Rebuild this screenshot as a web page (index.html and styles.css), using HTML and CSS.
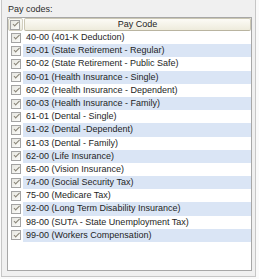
FILE: index.html
```html
<!DOCTYPE html>
<html lang="en">
<head>
    <meta charset="UTF-8">
    <title>Pay codes</title>
    <link rel="stylesheet" href="styles.css">
</head>
<body>
<div class="panel">
    <div class="caption">Pay codes:</div>
    <div class="list">
        <div class="head">
            <div class="head-check"><span class="chk"></span></div>
            <div class="head-title">Pay Code</div>
        </div>
        <div class="row"><div class="cell-check"><span class="chk"></span></div><div class="cell">40-00 (401-K Deduction)</div></div>
        <div class="row alt"><div class="cell-check"><span class="chk"></span></div><div class="cell">50-01 (State Retirement - Regular)</div></div>
        <div class="row"><div class="cell-check"><span class="chk"></span></div><div class="cell">50-02 (State Retirement - Public Safe)</div></div>
        <div class="row alt"><div class="cell-check"><span class="chk"></span></div><div class="cell">60-01 (Health Insurance - Single)</div></div>
        <div class="row"><div class="cell-check"><span class="chk"></span></div><div class="cell">60-02 (Health Insurance - Dependent)</div></div>
        <div class="row alt"><div class="cell-check"><span class="chk"></span></div><div class="cell">60-03 (Health Insurance - Family)</div></div>
        <div class="row"><div class="cell-check"><span class="chk"></span></div><div class="cell">61-01 (Dental - Single)</div></div>
        <div class="row alt"><div class="cell-check"><span class="chk"></span></div><div class="cell">61-02 (Dental -Dependent)</div></div>
        <div class="row"><div class="cell-check"><span class="chk"></span></div><div class="cell">61-03 (Dental - Family)</div></div>
        <div class="row alt"><div class="cell-check"><span class="chk"></span></div><div class="cell">62-00 (Life Insurance)</div></div>
        <div class="row"><div class="cell-check"><span class="chk"></span></div><div class="cell">65-00 (Vision Insurance)</div></div>
        <div class="row alt"><div class="cell-check"><span class="chk"></span></div><div class="cell">74-00 (Social Security Tax)</div></div>
        <div class="row"><div class="cell-check"><span class="chk"></span></div><div class="cell">75-00 (Medicare Tax)</div></div>
        <div class="row alt"><div class="cell-check"><span class="chk"></span></div><div class="cell">92-00 (Long Term Disability Insurance)</div></div>
        <div class="row"><div class="cell-check"><span class="chk"></span></div><div class="cell">98-00 (SUTA - State Unemployment Tax)</div></div>
        <div class="row alt"><div class="cell-check"><span class="chk"></span></div><div class="cell">99-00 (Workers Compensation)</div></div>
    </div>
</div>
</body>
</html>
```
FILE: styles.css
```css
body { margin: 0; background: #fafafa; font-family: 'Liberation Sans', Arial, sans-serif; font-size: 9px; color: #1e1e1e; }
.panel { box-sizing: border-box; width: 255px; height: 277px; margin-left: 1px; background: #f0f0f0; border: 1px solid #c6c6c6; border-top: none; padding: 3px 3px 5px 5px; display: flex; flex-direction: column; }
.caption { height: 14px; line-height: 13px; padding-left: 1px; color: #2b2b2b; }
.list { box-sizing: border-box; width: 245px; height: 254px; background: #fff; border: 1px solid #a7a7a7; }
.head { display: flex; height: 13px; }
.head-check { box-sizing: border-box; width: 15px; display: flex; align-items: center; justify-content: flex-end; padding-right: 2px; background: linear-gradient(#fbfbf7, #ebe9dc); border: 1px solid #d2cfbf; border-radius: 2px; }
.head-title { flex: 1; box-sizing: border-box; margin-left: 1px; line-height: 11px; text-align: center; background: linear-gradient(#fcfbf6, #eeebdc); border: 1px solid #cbc7b3; border-bottom-color: #b9b4a0; border-radius: 2px; }
.row { display: flex; height: 13.2px; }
.cell-check { width: 15px; display: flex; align-items: center; justify-content: flex-end; padding-right: 2px; box-sizing: border-box; }
.cell { flex: 1; padding-left: 3px; line-height: 13.2px; white-space: nowrap; }
.row.alt .cell { background: #dae5f5; }
.chk { position: relative; box-sizing: border-box; width: 10px; height: 10px; border: 1px solid #a3a3a3; background: linear-gradient(135deg, #e6e6e0, #fbfbf9); }
.chk::after { content: ''; position: absolute; left: 1.6px; top: 1.2px; width: 4.5px; height: 2.4px; border-left: 1.3px solid #8a8578; border-bottom: 1.3px solid #8a8578; transform: rotate(-45deg); }
```
